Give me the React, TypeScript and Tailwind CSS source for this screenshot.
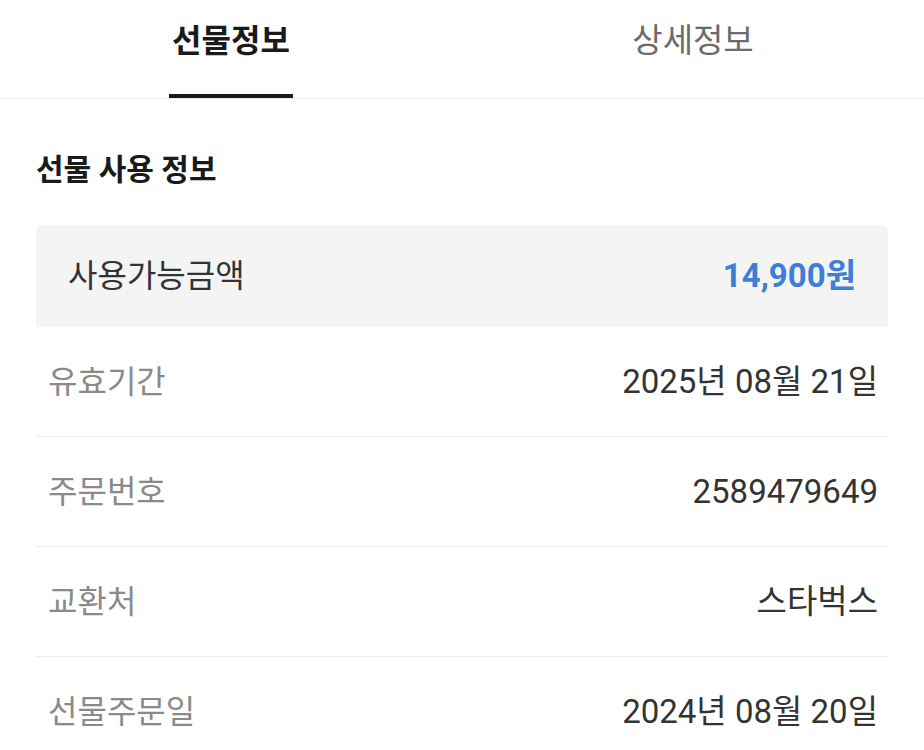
import React from "react";

const font = { fontFamily: 'Roboto, "Noto Sans CJK KR", "Noto Sans", sans-serif' };

const rows: [string, string][] = [
  ["유효기간", "2025년 08월 21일"],
  ["주문번호", "2589479649"],
  ["교환처", "스타벅스"],
  ["선물주문일", "2024년 08월 20일"],
];

export default function App() {
  return (
    <div className="w-[924px] h-[750px] overflow-hidden bg-white" style={font}>
      <div className="flex h-[99px] border-b border-[#ededed]">
        <div className="flex-1 flex flex-col items-center">
          <div className="flex-1 flex items-center pb-[12px] text-[32px] font-bold text-[#1a1a1a]">선물정보</div>
          <div className="w-[124px] h-[4px] bg-[#1a1a1a]" />
        </div>
        <div className="flex-1 flex flex-col items-center">
          <div className="flex-1 flex items-center pb-[16px] text-[33px] text-[#6b6b6b]">상세정보</div>
        </div>
      </div>
      <div className="px-[36px]">
        <div className="pt-[52px] pb-[36px] text-[30px] font-bold text-[#1a1a1a] leading-[38px]">선물 사용 정보</div>
        <div className="flex items-center justify-between h-[102px] bg-[#f4f4f4] rounded-t-[6px] pl-[32px] pr-[32px]">
          <span className="text-[32px] text-[#333333]">사용가능금액</span>
          <span className="text-[33px] font-bold text-[#3d7fd6]">14,900원</span>
        </div>
        {rows.map(([k, v]) => (
          <div key={k} className="flex items-center justify-between h-[110px] border-b border-[#ececec] pl-[12px] pr-[10px]">
            <span className="text-[32px] text-[#8a8a8a]">{k}</span>
            <span className="text-[33px] text-[#333333]">{v}</span>
          </div>
        ))}
      </div>
    </div>
  );
}
